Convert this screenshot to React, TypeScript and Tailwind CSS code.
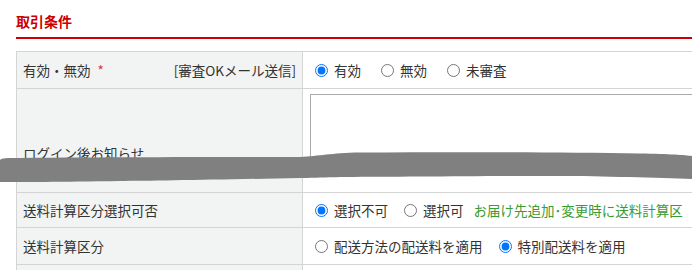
import React from "react";

const font = { fontFamily: '"Noto Sans CJK JP", "Noto Sans", sans-serif' };

function Radio({ checked, label, className = "" }: { checked?: boolean; label: string; className?: string }) {
  return (
    <label className={"flex items-center gap-[6px] " + className}>
      <input type="radio" defaultChecked={checked} className="m-0 h-[13px] w-[13px] accent-[#0075ff]" />
      <span>{label}</span>
    </label>
  );
}

export default function App() {
  return (
    <div className="relative h-[270px] w-[692px] overflow-hidden bg-white text-[13.5px] leading-[20px] text-[#333]" style={font}>
      <div className="pl-4 pt-[11px]">
        <div className="text-[14px] font-bold leading-[20px] text-[#cc0000]">取引条件</div>
        <div className="mt-[6px] h-[2px] w-[700px] bg-[#cc0000]" />
        <div className="mt-[12px] w-[800px] border-t border-l border-[#d4d4d4]">
          {/* Row 1 */}
          <div className="flex h-[37px] border-b border-[#d4d4d4]">
            <div className="flex w-[286px] items-center justify-between border-r border-[#d4d4d4] bg-[#f2f3f3] pl-[6px] pr-[6px]">
              <span>
                有効・無効<span className="ml-[7px] text-[#e0303a]">*</span>
              </span>
              <span>[審査OKメール送信]</span>
            </div>
            <div className="flex flex-1 items-center pl-[12px]">
              <Radio checked label="有効" />
              <Radio label="無効" className="ml-[20px]" />
              <Radio label="未審査" className="ml-[20px]" />
            </div>
          </div>
          {/* Row 2 */}
          <div className="flex h-[104px] border-b border-[#d4d4d4]">
            <div className="w-[286px] border-r border-[#d4d4d4] bg-[#f2f3f3] pl-[6px] pt-[54px]">ログイン後お知らせ</div>
            <div className="flex-1 pl-[7px] pt-[5px]">
              <textarea className="h-[72px] w-[500px] resize-none border border-[#a9a9a9] bg-white" />
            </div>
          </div>
          {/* Row 3 */}
          <div className="flex h-[35px] border-b border-[#d4d4d4]">
            <div className="flex w-[286px] items-center border-r border-[#d4d4d4] bg-[#f2f3f3] pl-[6px]">送料計算区分選択可否</div>
            <div className="flex flex-1 items-center whitespace-nowrap pl-[12px]">
              <Radio checked label="選択不可" />
              <Radio label="選択可" className="ml-[16px]" />
              <span className="ml-[10px] text-[#3b9b2f]">お届け先追加･変更時に送料計算区</span>
            </div>
          </div>
          {/* Row 4 */}
          <div className="flex h-[37px] border-b border-[#d4d4d4]">
            <div className="flex w-[286px] items-center border-r border-[#d4d4d4] bg-[#f2f3f3] pl-[6px]">送料計算区分</div>
            <div className="flex flex-1 items-center whitespace-nowrap pl-[12px]">
              <Radio label="配送方法の配送料を適用" />
              <Radio checked label="特別配送料を適用" className="ml-[16px]" />
            </div>
          </div>
          {/* Row 5 */}
          <div className="flex h-[30px]">
            <div className="w-[286px] border-r border-[#d4d4d4] bg-[#f2f3f3]" />
            <div className="flex-1" />
          </div>
        </div>
      </div>
      <svg className="absolute left-0 top-[145px]" width="692" height="45" viewBox="0 145 692 45">
        <path
          d="M0 160 C2 158 6 158 20 158 C120 157 250 157 300 157 C320 156 330 153 360 152.5 C450 152 560 152 640 153.5 C670 154 685 155 692 156 L692 179 C660 178 600 176 560 176 C480 176 400 177 345 177 C320 177.5 310 178 300 178 C220 179.5 150 181 120 181 C60 182 20 182 0 182 Z"
          fill="#808080"
        />
      </svg>
    </div>
  );
}
